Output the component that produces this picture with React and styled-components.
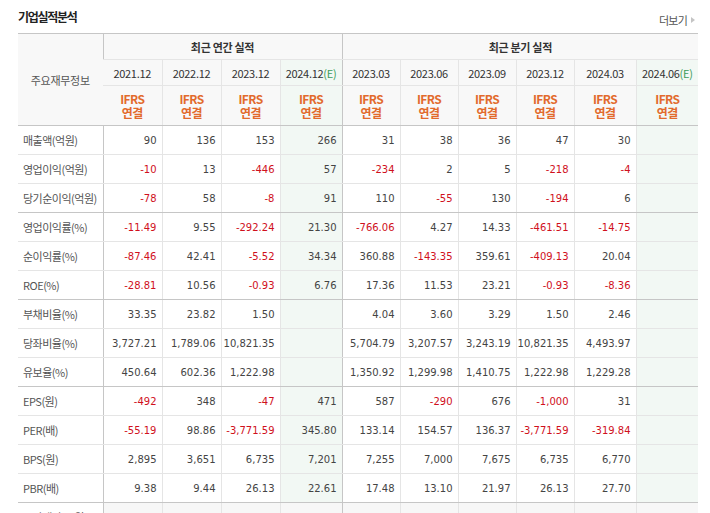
import styled, { createGlobalStyle } from 'styled-components';

const GlobalStyle = createGlobalStyle`
  body {
    margin: 0;
    background: #fff;
    font-family: 'Noto Sans CJK KR', 'Noto Sans', sans-serif;
  }
`;

const annualCols = [
  { label: '2021.12' },
  { label: '2022.12' },
  { label: '2023.12' },
  { label: '2024.12', estimate: true },
];

const quarterCols = [
  { label: '2023.03' },
  { label: '2023.06' },
  { label: '2023.09' },
  { label: '2023.12' },
  { label: '2024.03' },
  { label: '2024.06', estimate: true },
];

const widths = [85, 59, 59, 59, 62, 58, 58, 58, 58, 62, 62];

const rows = [
  { name: '매출액(억원)', values: ['90', '136', '153', '266', '31', '38', '36', '47', '30', ''] },
  { name: '영업이익(억원)', values: ['-10', '13', '-446', '57', '-234', '2', '5', '-218', '-4', ''] },
  { name: '당기순이익(억원)', end: true, values: ['-78', '58', '-8', '91', '110', '-55', '130', '-194', '6', ''] },
  { name: '영업이익률(%)', values: ['-11.49', '9.55', '-292.24', '21.30', '-766.06', '4.27', '14.33', '-461.51', '-14.75', ''] },
  { name: '순이익률(%)', values: ['-87.46', '42.41', '-5.52', '34.34', '360.88', '-143.35', '359.61', '-409.13', '20.04', ''] },
  { name: 'ROE(%)', end: true, values: ['-28.81', '10.56', '-0.93', '6.76', '17.36', '11.53', '23.21', '-0.93', '-8.36', ''] },
  { name: '부채비율(%)', values: ['33.35', '23.82', '1.50', '', '4.04', '3.60', '3.29', '1.50', '2.46', ''] },
  { name: '당좌비율(%)', values: ['3,727.21', '1,789.06', '10,821.35', '', '5,704.79', '3,207.57', '3,243.19', '10,821.35', '4,493.97', ''] },
  { name: '유보율(%)', end: true, values: ['450.64', '602.36', '1,222.98', '', '1,350.92', '1,299.98', '1,410.75', '1,222.98', '1,229.28', ''] },
  { name: 'EPS(원)', values: ['-492', '348', '-47', '471', '587', '-290', '676', '-1,000', '31', ''] },
  { name: 'PER(배)', values: ['-55.19', '98.86', '-3,771.59', '345.80', '133.14', '154.57', '136.37', '-3,771.59', '-319.84', ''] },
  { name: 'BPS(원)', values: ['2,895', '3,651', '6,735', '7,201', '7,255', '7,000', '7,675', '6,735', '6,770', ''] },
  { name: 'PBR(배)', end: true, values: ['9.38', '9.44', '26.13', '22.61', '17.48', '13.10', '21.97', '26.13', '27.70', ''] },
  { name: '주당배당금(원)', blank: true, values: ['', '', '', '', '', '', '', '', '', ''] },
  { name: '시가배당률(%)', blank: true, values: ['', '', '', '', '', '', '', '', '', ''] },
];

const allCols = [...annualCols, ...quarterCols];

const Page = styled.div`
  width: 680px;
  padding-left: 18px;
`;

const Header = styled.div`
  display: flex;
  justify-content: space-between;
  align-items: flex-start;
  height: 33px;
`;

const Title = styled.h3`
  margin: 0;
  padding-top: 10px;
  font-size: 12px;
  line-height: 14px;
  font-weight: bold;
  color: #222;
  letter-spacing: -1.3px;
`;

const More = styled.a`
  display: flex;
  align-items: center;
  padding: 13px 3px 0 0;
  font-size: 11px;
  line-height: 14px;
  color: #555;
  letter-spacing: -0.8px;
  cursor: pointer;
`;

const Arrow = styled.span`
  margin-left: 4px;
  width: 0;
  height: 0;
  border-left: 4px solid #c4c4c4;
  border-top: 3px solid transparent;
  border-bottom: 3px solid transparent;
`;

const Table = styled.table`
  width: 680px;
  border-collapse: collapse;
  table-layout: fixed;
  border-top: 1px solid #c6c6c6;
`;

const HeadCell = styled.th`
  padding: 0;
  height: ${(p) => p.$h}px;
  background: ${(p) => (p.$estimate ? '#f2f8f4' : '#f8f8f8')};
  border-bottom: 1px solid ${(p) => (p.$strong ? '#c6c6c6' : '#e5e5e5')};
  border-left: 1px solid ${(p) => (p.$sectionStart ? '#c6c6c6' : '#e5e5e5')};
  font-size: 11px;
  font-weight: ${(p) => (p.$bold ? 'bold' : 'normal')};
  color: ${(p) => (p.$muted ? '#555' : '#333')};
  text-align: center;
  vertical-align: middle;
  letter-spacing: -0.3px;
  &:first-child {
    border-left: none;
  }
`;

const Estimate = styled.span`
  color: #3d9c5a;
`;

const Ifrs = styled.span`
  display: block;
  font-size: 12px;
  line-height: 14px;
  font-weight: bold;
  color: #e26a2c;
  letter-spacing: -0.6px;
`;

const LabelCell = styled.td`
  padding: 0 0 0 5px;
  height: 28px;
  border-bottom: 1px solid ${(p) => (p.$end ? '#c6c6c6' : '#e5e5e5')};
  font-size: 11px;
  color: #555;
  letter-spacing: -0.5px;
  white-space: nowrap;
`;

const ValueCell = styled.td`
  padding: 0 5px 0 0;
  height: 28px;
  text-align: right;
  background: ${(p) => (p.$blank ? '#f7f7f7' : p.$estimate ? '#f2f8f4' : '#fff')};
  border-bottom: 1px solid ${(p) => (p.$end ? '#c6c6c6' : '#e5e5e5')};
  border-left: 1px solid ${(p) => (p.$sectionStart ? '#c6c6c6' : '#e5e5e5')};
  font-family: 'DejaVu Sans', Verdana, sans-serif;
  font-size: 10px;
  color: ${(p) => (p.$neg ? '#d0101c' : '#444')};
  white-space: nowrap;
`;

function YearHead({ col, index }) {
  return (
    <HeadCell $h={25} $estimate={col.estimate} $sectionStart={index === 0 || index === 4}>
      {col.label}
      {col.estimate && <Estimate>(E)</Estimate>}
    </HeadCell>
  );
}

export default function App() {
  return (
    <Page>
      <GlobalStyle />
      <Header>
        <Title>기업실적분석</Title>
        <More>
          더보기
          <Arrow />
        </More>
      </Header>
      <Table>
        <colgroup>
          {widths.map((w, i) => (
            <col key={i} style={{ width: w }} />
          ))}
        </colgroup>
        <thead>
          <tr>
            <HeadCell rowSpan={3} $h={25} $strong $muted>
              주요재무정보
            </HeadCell>
            <HeadCell colSpan={4} $h={25} $bold $sectionStart>
              최근 연간 실적
            </HeadCell>
            <HeadCell colSpan={6} $h={25} $bold $sectionStart>
              최근 분기 실적
            </HeadCell>
          </tr>
          <tr>
            {allCols.map((col, i) => (
              <YearHead key={i} col={col} index={i} />
            ))}
          </tr>
          <tr>
            {allCols.map((col, i) => (
              <HeadCell
                key={i}
                $h={39}
                $strong
                $estimate={col.estimate}
                $sectionStart={i === 0 || i === 4}
              >
                <Ifrs>IFRS</Ifrs>
                <Ifrs>연결</Ifrs>
              </HeadCell>
            ))}
          </tr>
        </thead>
        <tbody>
          {rows.map((row) => (
            <tr key={row.name}>
              <LabelCell $end={row.end}>{row.name}</LabelCell>
              {row.values.map((v, i) => (
                <ValueCell
                  key={i}
                  $end={row.end}
                  $blank={row.blank}
                  $estimate={allCols[i].estimate}
                  $sectionStart={i === 0 || i === 4}
                  $neg={v.startsWith('-')}
                >
                  {v}
                </ValueCell>
              ))}
            </tr>
          ))}
        </tbody>
      </Table>
    </Page>
  );
}
